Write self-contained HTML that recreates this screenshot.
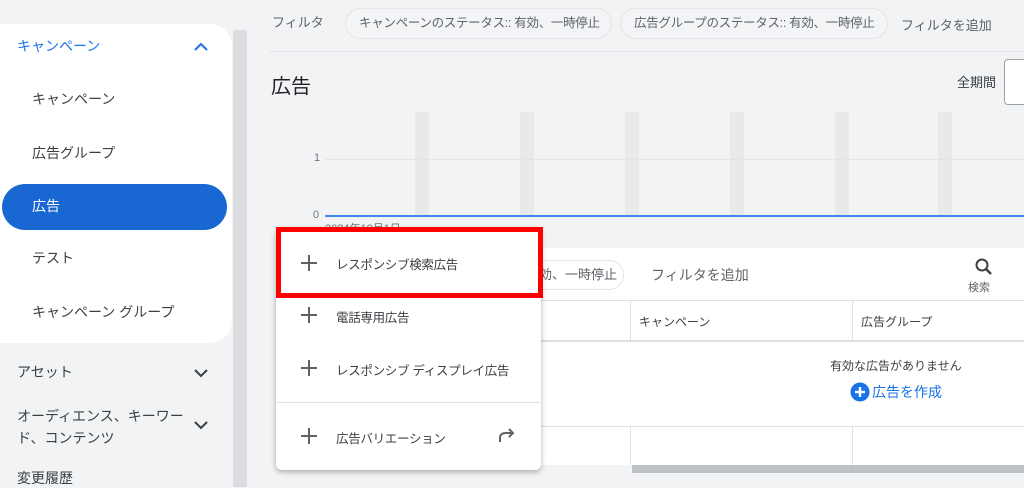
<!DOCTYPE html>
<html><head><meta charset="utf-8"><style>
*{margin:0;padding:0;box-sizing:border-box}
body{width:1024px;height:487px;overflow:hidden;background:#f1f3f4;font-family:"Liberation Sans","Noto Sans CJK JP",sans-serif;color:#3c4043;position:relative}
.a{position:absolute;white-space:nowrap}
.side{position:absolute;left:0;top:24px;width:232px;height:319px;background:#fff;border-radius:0 22px 22px 0}
.item{position:absolute;left:32px;font-size:14px;color:#3c4043;white-space:nowrap}
.chip{position:absolute;top:8px;height:31px;border:1px solid #e3e5e8;border-radius:16px;background:#f3f4f5;font-size:12.5px;letter-spacing:-0.3px;color:#5f6368;line-height:29px;padding-left:13px;white-space:nowrap;overflow:hidden}
.bar{position:absolute;top:112px;width:14px;height:103px;background:#e8e9eb}
.menu{position:absolute;left:276px;top:228px;width:265px;height:242px;background:#fff;border-radius:6px;box-shadow:0 2px 6px rgba(0,0,0,.3)}
.mi{position:absolute;left:60px;font-size:12.5px;letter-spacing:-0.3px;color:#3c4043;white-space:nowrap}
.pl{position:absolute;left:25px;width:16px;height:16px}
.pl:before{content:"";position:absolute;left:0;top:7px;width:16px;height:2px;background:#5f6368}
.pl:after{content:"";position:absolute;left:7px;top:0;width:2px;height:16px;background:#5f6368}
</style></head><body>
<div class="side"></div>
<div class="a" style="left:17px;top:36px;font-size:14px;color:#1a73e8">キャンペーン</div>
<svg class="a" style="left:193px;top:42px" width="16" height="10"><path d="M2 8 L8 2 L14 8" stroke="#1a73e8" stroke-width="2" fill="none"/></svg>
<div class="item" style="top:89px">キャンペーン</div>
<div class="item" style="top:143px">広告グループ</div>
<div class="a" style="left:2px;top:184px;width:225px;height:46px;background:#1967d2;border-radius:23px"></div>
<div class="item" style="top:196px;color:#fff">広告</div>
<div class="item" style="top:248px">テスト</div>
<div class="item" style="top:302px">キャンペーン グループ</div>
<div class="a" style="left:17px;top:362px;font-size:14px">アセット</div>
<div class="a" style="left:17px;top:405px;font-size:14px;line-height:22px">オーディエンス、キーワー<br>ド、コンテンツ</div>
<div class="a" style="left:17px;top:468px;font-size:14px">変更履歴</div>
<svg class="a" style="left:193px;top:368px" width="16" height="10"><path d="M2 2 L8 8 L14 2" stroke="#3c4043" stroke-width="2" fill="none"/></svg>
<svg class="a" style="left:193px;top:420px" width="16" height="10"><path d="M2 2 L8 8 L14 2" stroke="#3c4043" stroke-width="2" fill="none"/></svg>
<div class="a" style="left:233px;top:30px;width:14px;height:457px;background:#dadce0"></div>

<div class="a" style="left:272px;top:12px;font-size:13px;color:#5f6368">フィルタ</div>
<div class="chip" style="left:345px;width:267px">キャンペーンのステータス:: 有効、一時停止</div>
<div class="chip" style="left:620px;width:268px">広告グループのステータス:: 有効、一時停止</div>
<div class="a" style="left:901px;top:15px;font-size:13px;color:#5f6368">フィルタを追加</div>
<div class="a" style="left:270px;top:51px;width:754px;height:1px;background:#e0e2e5"></div>
<div class="a" style="left:271px;top:70px;font-size:20px;color:#202124">広告</div>
<div class="a" style="left:957px;top:72px;font-size:13px">全期間</div>
<div class="a" style="left:1004px;top:59px;width:30px;height:46px;border:1px solid #9aa0a6;border-radius:4px;background:#fff"></div>

<div class="bar" style="left:415px"></div><div class="bar" style="left:520px"></div><div class="bar" style="left:625px"></div><div class="bar" style="left:730px"></div><div class="bar" style="left:835px"></div><div class="bar" style="left:938px"></div>
<div class="a" style="left:325px;top:159px;width:699px;height:1px;background:#e3e4e6"></div>
<div class="a" style="left:314px;top:152px;font-size:11px;color:#70757a">1</div>
<div class="a" style="left:313px;top:209px;font-size:11px;color:#70757a">0</div>
<div class="a" style="left:325px;top:215px;width:699px;height:2px;background:#4285f4"></div>
<div class="a" style="left:325px;top:220px;font-size:11px;color:#70757a">2024年10月1日</div>

<div class="a" style="left:276px;top:248px;width:748px;height:217px;background:#fff"></div>
<div class="a" style="left:520px;top:260px;width:104px;height:30px;border:1px solid #e3e5e8;border-radius:15px;font-size:13px;line-height:28px;padding-left:18px;color:#5f6368">効、一時停止</div>
<div class="a" style="left:651px;top:265px;font-size:14px;color:#5f6368">フィルタを追加</div>
<svg class="a" style="left:974px;top:257px" width="20" height="20"><circle cx="8" cy="8" r="5.5" stroke="#3c4043" stroke-width="2" fill="none"/><path d="M12 12 L17 17" stroke="#3c4043" stroke-width="2.4"/></svg>
<div class="a" style="left:968px;top:279px;font-size:11px;color:#5f6368">検索</div>
<div class="a" style="left:276px;top:300px;width:748px;height:1px;background:#e0e0e0"></div>
<div class="a" style="left:276px;top:340px;width:748px;height:2px;background:#e0e0e0"></div>
<div class="a" style="left:276px;top:426px;width:748px;height:1px;background:#e0e0e0"></div>
<div class="a" style="left:630px;top:300px;width:1px;height:41px;background:#e0e0e0"></div>
<div class="a" style="left:852px;top:300px;width:1px;height:41px;background:#e0e0e0"></div>
<div class="a" style="left:630px;top:426px;width:1px;height:39px;background:#e0e0e0"></div>
<div class="a" style="left:852px;top:426px;width:1px;height:39px;background:#e0e0e0"></div>
<div class="a" style="left:639px;top:313px;font-size:12px">キャンペーン</div>
<div class="a" style="left:861px;top:313px;font-size:12px">広告グループ</div>
<div class="a" style="left:830px;top:357px;font-size:12px">有効な広告がありません</div>
<svg class="a" style="left:850px;top:382px" width="20" height="20"><circle cx="10" cy="10" r="9.5" fill="#1a73e8"/><path d="M10 5 V15 M5 10 H15" stroke="#fff" stroke-width="2.4"/></svg>
<div class="a" style="left:872px;top:382px;font-size:14px;color:#1a73e8">広告を作成</div>
<div class="a" style="left:632px;top:465px;width:392px;height:8px;background:#bdc1c6"></div>

<div class="menu">
<div class="pl" style="top:27px"></div><div class="mi" style="top:26px">レスポンシブ検索広告</div>
<div class="pl" style="top:79px"></div><div class="mi" style="top:79px">電話専用広告</div>
<div class="pl" style="top:132px"></div><div class="mi" style="top:132px">レスポンシブ ディスプレイ広告</div>
<div class="a" style="left:0;top:174px;width:265px;height:1px;background:#e0e0e0"></div>
<div class="pl" style="top:200px"></div><div class="mi" style="top:200px">広告バリエーション</div>
<svg class="a" style="left:221px;top:200px" width="20" height="16"><path d="M3 14 V10 Q3 5 9 5 H16 M12 1 L16 5 L12 9" stroke="#5f6368" stroke-width="2" fill="none"/></svg>
</div>
<div class="a" style="left:276px;top:227px;width:267px;height:71px;border:5px solid #f00"></div>
</body></html>
